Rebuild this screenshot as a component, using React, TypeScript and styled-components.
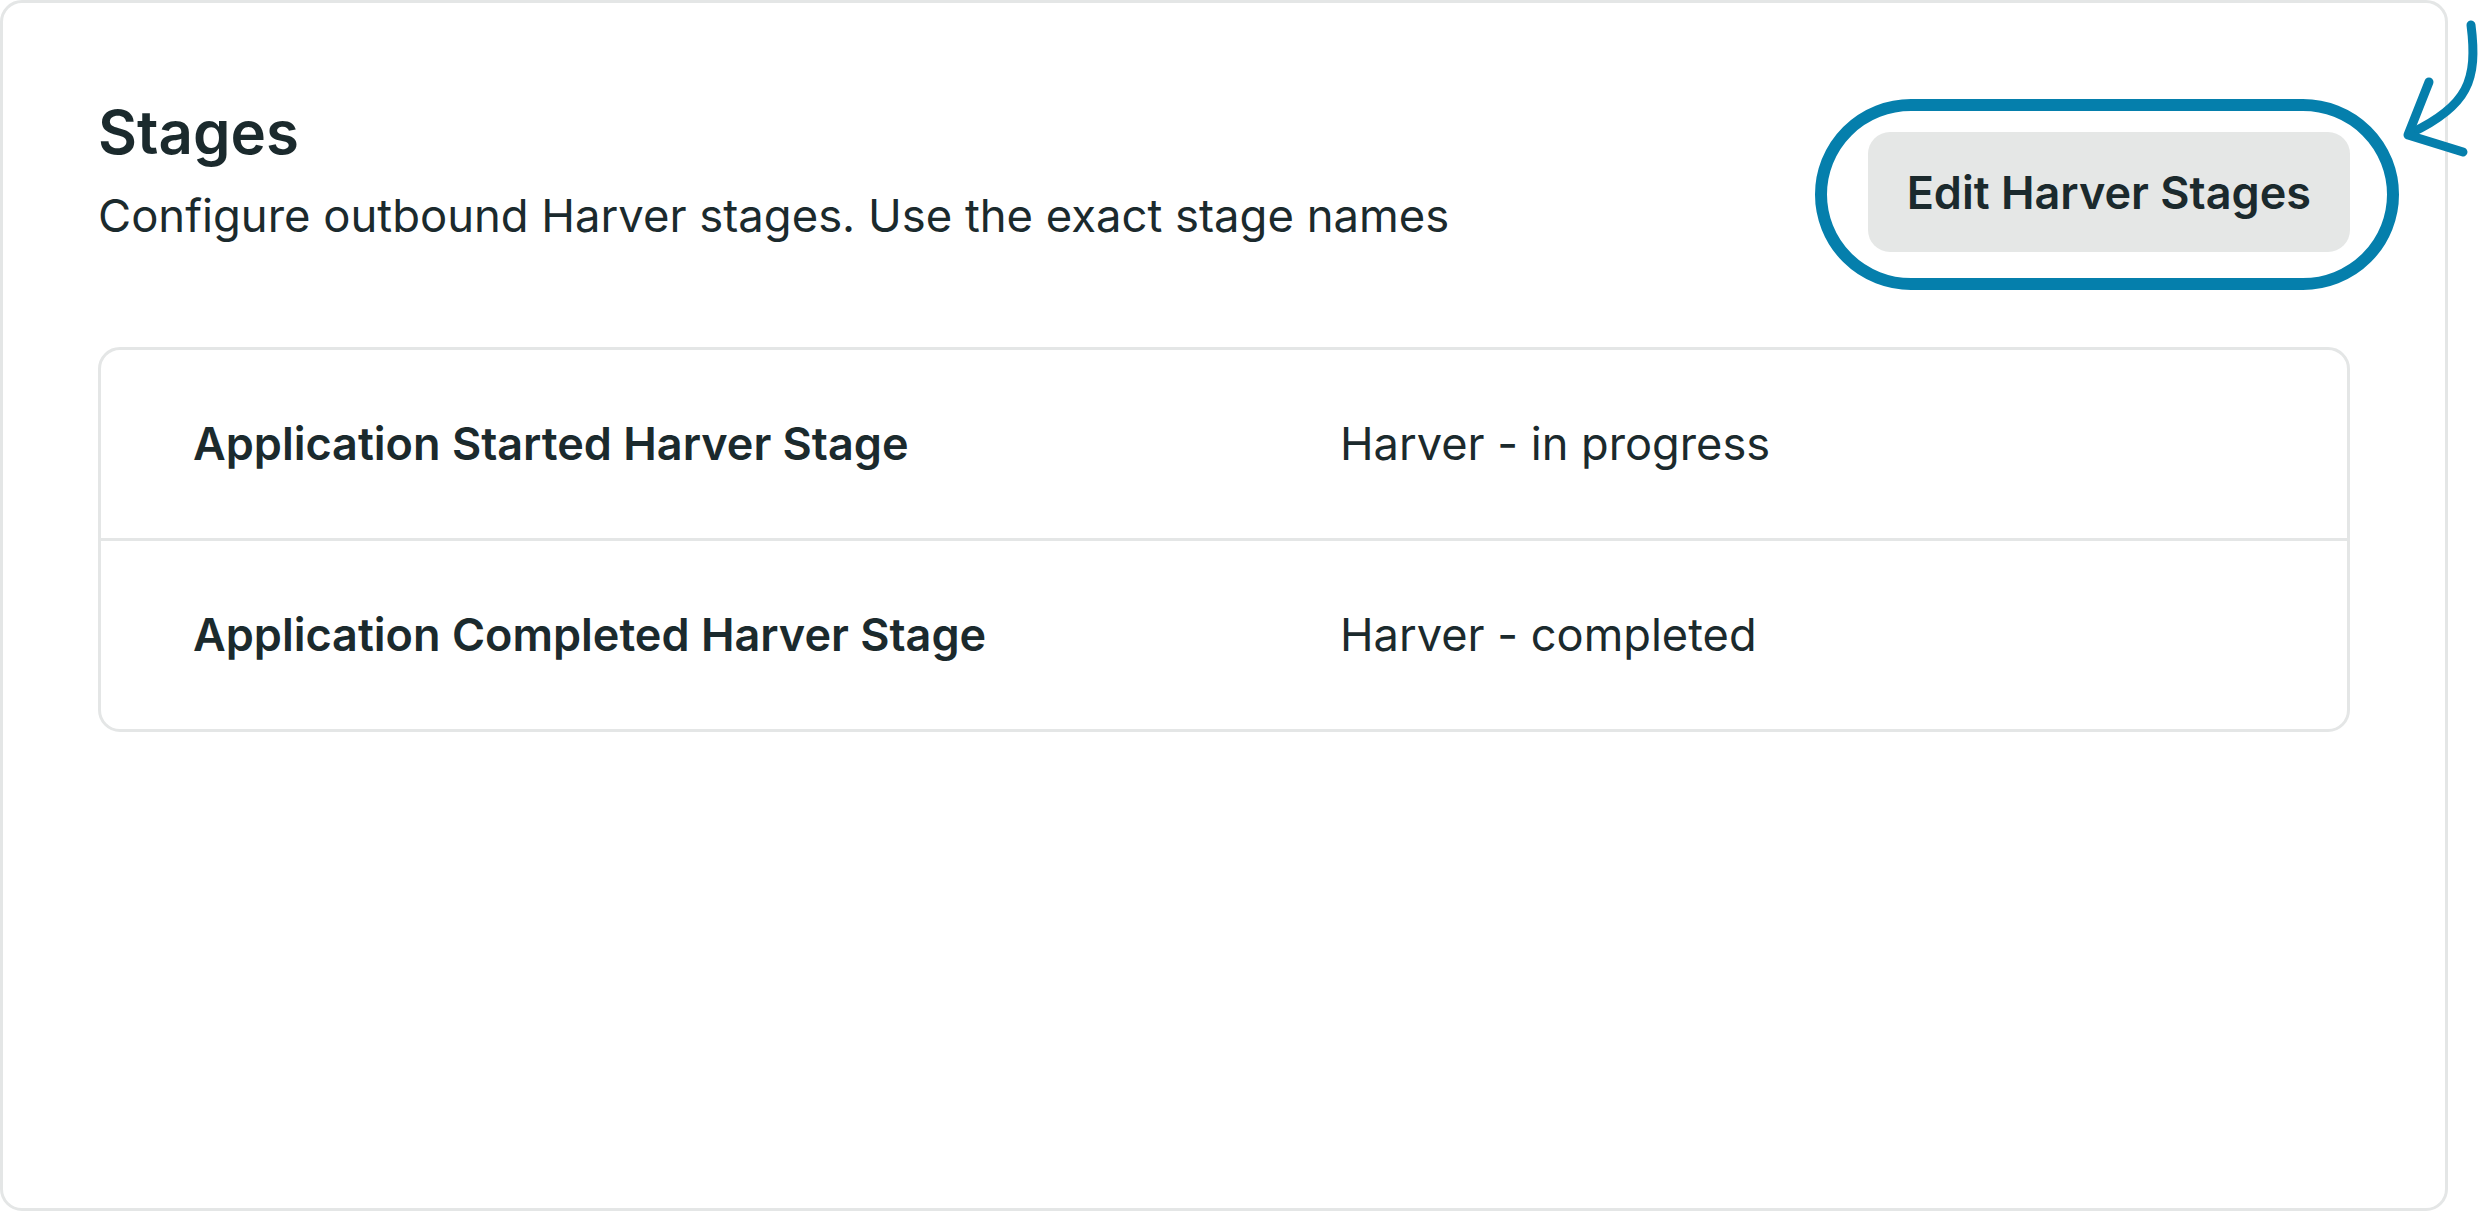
import React from "react";
import styled, { createGlobalStyle } from "styled-components";

const ink = "#1b2a2d";
const line = "#e4e6e6";
const accent = "#057fac";

const GlobalStyle = createGlobalStyle`
  html, body {
    margin: 0;
    padding: 0;
    background: #ffffff;
  }
  body {
    font-family: Inter, "Noto Sans", "Liberation Sans", sans-serif;
    color: ${ink};
  }
`;

const Page = styled.div`
  position: relative;
  width: 2480px;
  height: 1212px;
  overflow: hidden;
`;

const Card = styled.section`
  box-sizing: border-box;
  width: 2448px;
  height: 1211px;
  border: 3px solid ${line};
  border-radius: 22px;
  padding: 94px 95px 0 95px;
  background: #ffffff;
`;

const Header = styled.div`
  display: flex;
  justify-content: space-between;
  align-items: flex-start;
`;

const TitleBlock = styled.div`
  display: flex;
  flex-direction: column;
`;

const Title = styled.h2`
  margin: 0;
  font-size: 60px;
  line-height: 70px;
  font-weight: 600;
`;

const Subtitle = styled.p`
  margin: 16px 0 0;
  font-size: 45.4px;
  line-height: 66px;
  font-weight: 400;
`;

const EditButton = styled.button`
  margin-top: 35px;
  height: 120px;
  padding: 0 39px;
  border: none;
  border-radius: 22px;
  background: #e5e7e6;
  color: ${ink};
  font-family: inherit;
  font-size: 45px;
  font-weight: 600;
  cursor: pointer;
`;

const Table = styled.div`
  margin-top: 95px;
  border: 3px solid ${line};
  border-radius: 22px;
  overflow: hidden;
`;

const Row = styled.div`
  display: grid;
  grid-template-columns: 1147px 1fr;
  align-items: center;
  height: 188px;
  padding-left: 92px;
  & + & {
    border-top: 3px solid ${line};
  }
`;

const Cell = styled.span<{ $strong?: boolean }>`
  font-size: ${(p) => (p.$strong ? "45px" : "45.2px")};
  line-height: 60px;
  font-weight: ${(p) => (p.$strong ? 600 : 400)};
`;

const Annotation = styled.svg`
  position: absolute;
  top: 0;
  left: 0;
  pointer-events: none;
`;

const stages = [
  { name: "Application Started Harver Stage", value: "Harver - in progress" },
  { name: "Application Completed Harver Stage", value: "Harver - completed" },
];

export default function App() {
  return (
    <Page>
      <GlobalStyle />
      <Card>
        <Header>
          <TitleBlock>
            <Title>Stages</Title>
            <Subtitle>
              Configure outbound Harver stages. Use the exact stage names
            </Subtitle>
          </TitleBlock>
          <EditButton>Edit Harver Stages</EditButton>
        </Header>
        <Table>
          {stages.map((s) => (
            <Row key={s.name}>
              <Cell $strong>{s.name}</Cell>
              <Cell>{s.value}</Cell>
            </Row>
          ))}
        </Table>
      </Card>
      <Annotation width="2480" height="1212" viewBox="0 0 2480 1212">
        <rect
          x="1821"
          y="105"
          width="572"
          height="179"
          rx="90"
          fill="none"
          stroke={accent}
          strokeWidth="12"
        />
        <path
          d="M2471 25 C2478 80 2468 106 2411 133"
          fill="none"
          stroke={accent}
          strokeWidth="9"
          strokeLinecap="round"
        />
        <path
          d="M2429 82 L2408 135 L2463 152"
          fill="none"
          stroke={accent}
          strokeWidth="9"
          strokeLinecap="round"
          strokeLinejoin="round"
        />
      </Annotation>
    </Page>
  );
}
